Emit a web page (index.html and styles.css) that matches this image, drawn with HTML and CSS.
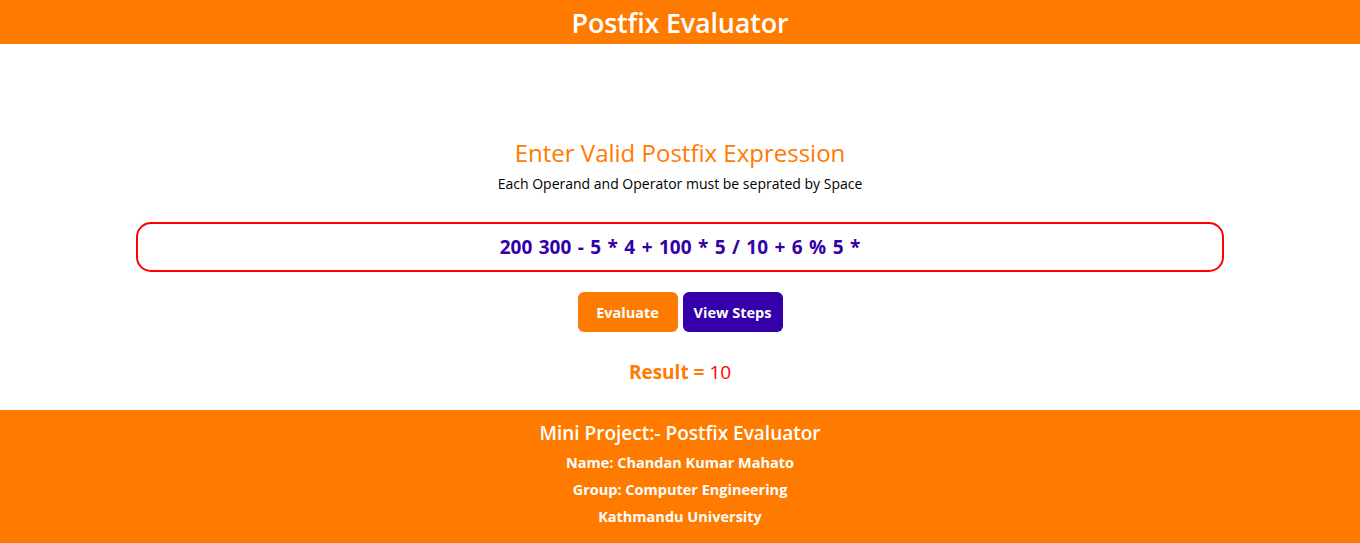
FILE: index.html
```html
<!DOCTYPE html>
<html lang="en">
<head>
<meta charset="utf-8">
<title>Postfix Evaluator</title>
<link rel="stylesheet" href="styles.css">
</head>
<body>
<header class="topbar">
  <h1 class="topbar-title">Postfix Evaluator</h1>
</header>
<main class="main">
  <h2 class="prompt">Enter Valid Postfix Expression</h2>
  <p class="hint">Each Operand and Operator must be seprated by Space</p>
  <div class="expr-box">
    <input class="expr-input" type="text" value="200 300 - 5 * 4 + 100 * 5 / 10 + 6 % 5 *">
  </div>
  <div class="actions">
    <button class="btn btn-orange">Evaluate</button>
    <button class="btn btn-purple">View Steps</button>
  </div>
  <p class="result"><span class="result-label">Result = </span><span class="result-value">10</span></p>
</main>
<footer class="footer">
  <p class="footer-title">Mini Project:- Postfix Evaluator</p>
  <p class="footer-line">Name: Chandan Kumar Mahato</p>
  <p class="footer-line">Group: Computer Engineering</p>
  <p class="footer-line">Kathmandu University</p>
</footer>
</body>
</html>
```
FILE: styles.css
```css
* { box-sizing: border-box; }
html, body { margin: 0; padding: 0; }
body {
  font-family: "Open Sans", "Noto Sans", "Liberation Sans", sans-serif;
  background: #ffffff;
  color: #000;
  height: 543px;
  display: flex;
  flex-direction: column;
  overflow: hidden;
}
.topbar {
  background: #ff7b00;
  height: 44px;
  display: flex;
  align-items: flex-start;
  justify-content: center;
  overflow: hidden;
}
.topbar-title {
  margin: 0;
  color: #fff;
  font-size: 27px;
  font-weight: 600;
  line-height: 46px;
  letter-spacing: -0.2px;
}
.main {
  flex: 1;
  display: flex;
  flex-direction: column;
  align-items: center;
  padding-top: 93px;
}
.prompt {
  margin: 0;
  color: #ff7b00;
  font-size: 24px;
  font-weight: 400;
  line-height: 32px;
}
.hint {
  margin: 5px 0 0;
  font-size: 14px;
  line-height: 19px;
}
.expr-box {
  margin-top: 29px;
  width: 80%;
}
.expr-input {
  display: block;
  width: 100%;
  height: 50px;
  border: 2px solid #ff0000;
  border-radius: 15px;
  outline: none;
  text-align: center;
  font-family: inherit;
  font-size: 19px;
  font-weight: 700;
  word-spacing: 1.5px;
  color: #3300aa;
  background: #fff;
}
.actions {
  margin-top: 20px;
  display: flex;
  gap: 5px;
}
.btn {
  width: 100px;
  height: 40px;
  border: none;
  border-radius: 6px;
  color: #fff;
  font-family: inherit;
  font-size: 14.5px;
  font-weight: 700;
  padding: 0;
}
.btn-orange { background: #ff7b00; }
.btn-purple { background: #3300aa; }
.result {
  margin: 28px 0 0;
  font-size: 19px;
  line-height: 25px;
}
.result-label { color: #ff7b00; font-weight: 700; }
.result-value { color: #ff0000; font-weight: 400; }
.footer {
  background: #ff7b00;
  height: 133px;
  padding-top: 10px;
  display: flex;
  flex-direction: column;
  align-items: center;
  color: #fff;
}
.footer-title {
  margin: 0 0 3px;
  font-size: 19px;
  font-weight: 600;
  line-height: 26px;
}
.footer-line {
  margin: 0;
  font-size: 14.5px;
  font-weight: 700;
  line-height: 27px;
}
```
